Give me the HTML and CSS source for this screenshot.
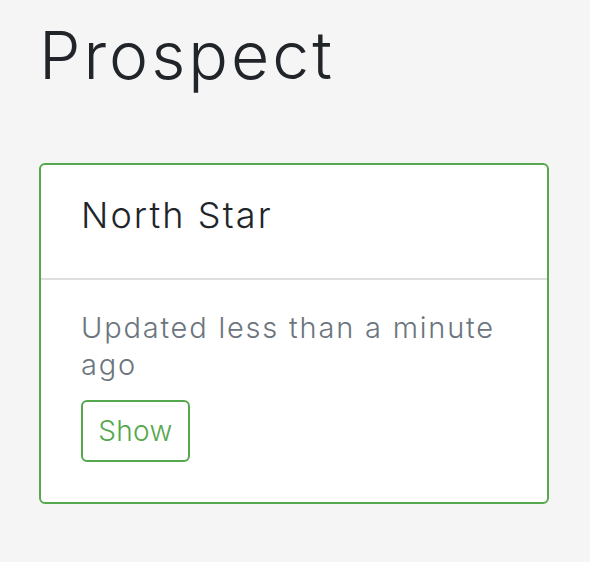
FILE: index.html
```html
<!DOCTYPE html>
<html>
<head>
<meta charset="utf-8">
<link rel="stylesheet" href="styles.css">
</head>
<body>
<main class="page">
  <h1 class="title">Prospect</h1>
  <section class="card">
    <div class="card-header">
      <h5 class="card-title">North Star</h5>
    </div>
    <div class="card-body">
      <p class="card-text">Updated less than a minute ago</p>
      <a class="btn" href="#">Show</a>
    </div>
  </section>
</main>
</body>
</html>
```
FILE: styles.css
```css
html, body {
  margin: 0;
  padding: 0;
  background: #f5f5f5;
}
body {
  font-family: Inter, "Liberation Sans", sans-serif;
  font-weight: 300;
  color: #212529;
}
.page {
  padding: 15px 41px 0 39px;
}
.title {
  margin: 0;
  font-size: 66px;
  line-height: 80px;
  font-weight: 300;
  letter-spacing: 3px;
  color: #212529;
}
.card {
  margin-top: 68px;
  width: 510px;
  box-sizing: border-box;
  border: 2px solid #55a84e;
  border-radius: 6px;
  background: #fff;
}
.card-header {
  padding: 28px 40px 41px;
  border-bottom: 2px solid #dedede;
}
.card-title {
  margin: 0;
  font-size: 36px;
  line-height: 44px;
  font-weight: 300;
  letter-spacing: 2.1px;
  color: #212529;
}
.card-body {
  padding: 29px 40px 40px;
}
.card-text {
  margin: 0 0 17px;
  font-size: 29px;
  line-height: 37px;
  letter-spacing: 1.8px;
  color: #6c757d;
}
.btn {
  display: inline-flex;
  align-items: center;
  justify-content: center;
  box-sizing: border-box;
  width: 109px;
  height: 62px;
  border: 2px solid #55a84e;
  border-radius: 6px;
  color: #55a84e;
  font-size: 28px;
  letter-spacing: 0.3px;
  text-decoration: none;
}
```
